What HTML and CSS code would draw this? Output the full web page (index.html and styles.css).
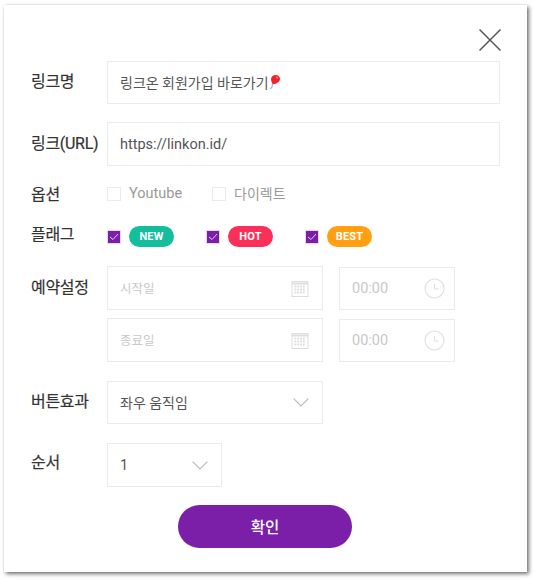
FILE: index.html
```html
<!DOCTYPE html>
<html lang="ko">
<head>
<meta charset="utf-8">
<title>링크 편집</title>
<link rel="stylesheet" href="styles.css">
</head>
<body>
<main class="card">
  <button class="close" aria-label="닫기">
    <svg width="24" height="24" viewBox="0 0 24 24"><path d="M1.500 1.500 22.500 22.500M22.500 1.500 1.500 22.500" stroke="#555" stroke-width="1.500" fill="none"/></svg>
  </button>
  <div class="row row-name">
    <div class="label">링크명</div>
    <div class="field wide"><span class="ko">링크온 회원가입 바로가기</span>
      <svg class="balloon" width="13" height="16" viewBox="0 0 13 16"><path d="M4.500 9.500 4 13 Q3.800 14.500 2 14.500" stroke="#6f7fe8" stroke-width=".8" fill="none"/><path d="M7.600 1C10.400 1 12 3 12 5 12 7.600 9 9.600 6 10.200 5 10.400 4.600 10 4.400 9.600 3.600 8 3 6.800 3 5 3 3 5 1 7.600 1Z" fill="#f5222d"/><circle cx="9" cy="3.600" r="1" fill="#ff7d7d"/></svg>
    </div>
  </div>
  <div class="row row-url">
    <div class="label">링크(URL)</div>
    <div class="field wide tall"><span>https://linkon.id/</span></div>
  </div>
  <div class="row row-option">
    <div class="label">옵션</div>
    <div class="checks">
      <label class="check"><i class="box"></i>Youtube</label>
      <label class="check check-ko"><i class="box"></i>다이렉트</label>
    </div>
  </div>
  <div class="row row-flag">
    <div class="label">플래그</div>
    <div class="flags">
      <div class="flag"><i class="box on"><svg width="10" height="8" viewBox="0 0 10 8"><path d="M1 4 4 6.500 9 1" stroke="#e3c9f0" stroke-width="1" fill="none"/></svg></i><b class="pill new">NEW</b></div>
      <div class="flag"><i class="box on"><svg width="10" height="8" viewBox="0 0 10 8"><path d="M1 4 4 6.500 9 1" stroke="#e3c9f0" stroke-width="1" fill="none"/></svg></i><b class="pill hot">HOT</b></div>
      <div class="flag"><i class="box on"><svg width="10" height="8" viewBox="0 0 10 8"><path d="M1 4 4 6.500 9 1" stroke="#e3c9f0" stroke-width="1" fill="none"/></svg></i><b class="pill best">BEST</b></div>
    </div>
  </div>
  <div class="row row-date">
    <div class="label">예약설정</div>
    <div class="dates">
      <div class="date-line">
        <div class="field date tall muted"><span class="hint">시작일</span>
          <svg class="cal" width="18" height="17" viewBox="0 0 18 17"><use href="#cal"/></svg>
        </div>
        <div class="field time muted"><span>00:00</span>
          <svg width="21" height="21" viewBox="0 0 21 21"><use href="#clock"/></svg>
        </div>
      </div>
      <div class="date-line">
        <div class="field date tall muted"><span class="hint">종료일</span>
          <svg class="cal" width="18" height="17" viewBox="0 0 18 17"><use href="#cal"/></svg>
        </div>
        <div class="field time muted"><span>00:00</span>
          <svg width="21" height="21" viewBox="0 0 21 21"><use href="#clock"/></svg>
        </div>
      </div>
    </div>
  </div>
  <div class="row row-effect">
    <div class="label">버튼효과</div>
    <div class="field date select"><span class="ko">좌우 움직임</span>
      <svg width="16" height="9" viewBox="0 0 16 9"><path d="M.7.7 8 8 15.300.7" stroke="#bbb" stroke-width="1.200" fill="none"/></svg>
    </div>
  </div>
  <div class="row row-order">
    <div class="label">순서</div>
    <div class="field small select tall"><span>1</span>
      <svg width="16" height="9" viewBox="0 0 16 9"><path d="M.7.7 8 8 15.300.7" stroke="#bbb" stroke-width="1.200" fill="none"/></svg>
    </div>
  </div>
  <div class="actions"><button class="confirm">확인</button></div>
</main>
<svg class="defs" width="0" height="0">
  <defs>
    <g id="cal" fill="none">
      <rect x="1" y="1.500" width="16" height="15" stroke="#ddd"/>
      <path d="M1 3.500H17" stroke="#ddd" stroke-width="2"/>
      <path d="M3.500 6.500H14.500M3.500 9.500H14.500M3.500 12.500H14.500" stroke="#ddd" stroke-width="1.800" stroke-dasharray="1.800 1"/>
    </g>
    <g id="clock" fill="none" stroke="#e2e2e2">
      <circle cx="10.500" cy="10.500" r="9.500" stroke-width="1.200"/>
      <path d="M10.500 6V11H14.500" stroke="#ddd"/>
    </g>
  </defs>
</svg>
</body>
</html>
```
FILE: styles.css
```css
* { box-sizing: border-box; }
html, body { margin: 0; padding: 0; background: #fff; }
body { width: 534px; height: 580px; overflow: hidden; padding: 5px 0 0 4px; font-family: Roboto, "Noto Sans CJK KR", sans-serif; }
.card {
  position: relative;
  width: 523px;
  height: 567px;
  padding: 56px 27px 0;
  background: #fff;
  box-shadow: 2px 2px 4px rgba(0,0,0,.55), 0 0 2px rgba(0,0,0,.1);
}
.close { position: absolute; left: 474px; top: 23px; width: 24px; height: 24px; padding: 0; border: 0; background: none; line-height: 0; }
.row { display: flex; align-items: flex-start; }
.label { width: 76px; flex: none; font-size: 16px; font-weight: 400; line-height: 22px; color: #333; letter-spacing: -.3px; -webkit-text-stroke: .2px #333; }
.field {
  display: flex; align-items: center; justify-content: space-between;
  height: 43px; padding: 0 11px 0 12px;
  border: 1.500px solid #ebebeb;
  font-size: 14.500px; color: #555;
  background: #fff;
}
.tall { height: 44px; }
.wide { width: 393px; justify-content: flex-start; }
.ko { font-size: 14px; margin-top: -2px; }
.hint { font-size: 12.500px; margin-top: -1px; }
.balloon { margin: -1px 0 0 -1px; }
.cal { margin-right: 2px; }
.date { width: 216px; }
.time { width: 116px; height: 43px; padding-right: 9px; }
.small { width: 115px; }
.muted { color: #c8c8c8; }
.select svg { margin-right: 2px; }
.row-name .label { padding-top: 10px; }
.row-url { margin-top: 18px; }
.row-url .label { padding-top: 11px; }
.row-option { margin-top: 16px; height: 22px; }
.row-option .label { padding-top: 2px; }
.checks { display: flex; gap: 30px; }
.check { display: flex; align-items: center; gap: 8px; font-size: 14.500px; line-height: 22px; color: #999; margin-top: 1px; }
.check-ko { font-size: 14px; }
.box { display: block; width: 14px; height: 14px; border: 1.500px solid #ebebeb; background: #fff; }
.box.on { display: flex; align-items: center; justify-content: center; background: #7b1fa9; border: 1px solid #e6d5ef; }
.row-flag { margin-top: 20px; height: 24px; }
.flags { display: flex; gap: 32px; margin-top: 2px; }
.flag { display: flex; align-items: center; gap: 8px; }
.pill { display: flex; align-items: center; justify-content: center; width: 45px; height: 21px; border-radius: 11px; color: #fff; font: 700 11px/1 Roboto, sans-serif; letter-spacing: .2px; }
.new { background: #14bd9c; }
.hot { background: #fb3059; }
.best { background: #ff9f11; }
.row-date { margin-top: 18px; }
.row-date .label { padding-top: 11px; }
.dates { display: flex; flex-direction: column; gap: 8px; }
.date-line { display: flex; align-items: flex-end; gap: 16px; }
.row-effect { margin-top: 19px; }
.row-effect .label { padding-top: 10px; }
.row-order { margin-top: 19px; }
.row-order .label { padding-top: 9px; }
.actions { display: flex; justify-content: center; margin: 18px 0 0 -1px; }
.confirm { width: 174px; height: 43px; border: 0; border-radius: 22px; background: #7b1fa9; color: #fff; font: 500 15.500px/1 "Noto Sans CJK KR", sans-serif; }
.defs { position: absolute; }
```
